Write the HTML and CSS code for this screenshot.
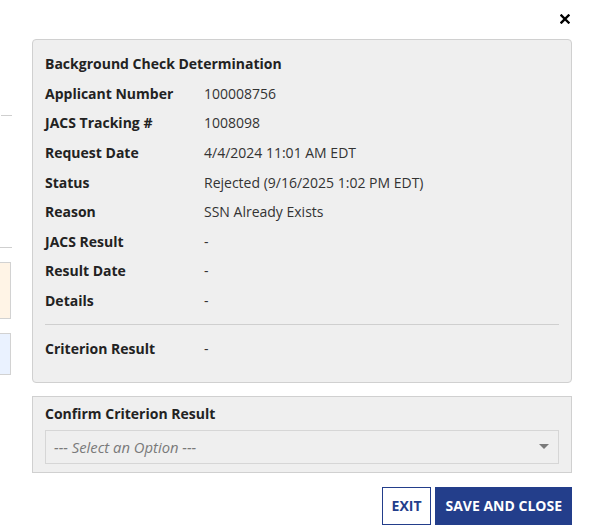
FILE: index.html
```html
<!DOCTYPE html>
<html lang="en">
<head>
    <meta charset="UTF-8">
    <title>Background Check Determination</title>
    <link rel="stylesheet" href="styles.css">
</head>
<body>
    <div class="behind">
        <div class="behind-line first"></div>
        <div class="behind-line second"></div>
        <div class="behind-box notice"></div>
        <div class="behind-box info"></div>
    </div>
    <div class="modal">
        <div class="modal-top">
            <span class="close-btn" title="Close">
                <svg width="10" height="10" viewBox="0 0 10 10">
                    <path d="M1.5 1.5 L8.5 8.5 M8.5 1.5 L1.5 8.5" stroke="#000" stroke-width="2.4" stroke-linecap="square"/>
                </svg>
            </span>
        </div>

        <div class="panel details">
            <div class="row title">Background Check Determination</div>
            <div class="row"><span class="label">Applicant Number</span><span class="value">100008756</span></div>
            <div class="row"><span class="label">JACS Tracking #</span><span class="value">1008098</span></div>
            <div class="row"><span class="label">Request Date</span><span class="value">4/4/2024 11:01 AM EDT</span></div>
            <div class="row"><span class="label">Status</span><span class="value">Rejected (9/16/2025 1:02 PM EDT)</span></div>
            <div class="row"><span class="label">Reason</span><span class="value">SSN Already Exists</span></div>
            <div class="row"><span class="label">JACS Result</span><span class="value">-</span></div>
            <div class="row"><span class="label">Result Date</span><span class="value">-</span></div>
            <div class="row"><span class="label">Details</span><span class="value">-</span></div>
            <hr>
            <div class="row"><span class="label">Criterion Result</span><span class="value">-</span></div>
        </div>

        <div class="panel confirm">
            <div class="confirm-label">Confirm Criterion Result</div>
            <div class="select">
                <span>--- Select an Option ---</span>
                <span class="caret"></span>
            </div>
        </div>

        <div class="actions">
            <button class="btn btn-outline">Exit</button>
            <button class="btn btn-primary">Save and Close</button>
        </div>
    </div>
</body>
</html>
```

FILE: styles.css
```css
body {
    margin: 0;
    padding: 0;
    font-family: 'Open Sans', 'Liberation Sans', sans-serif;
    font-size: 14px;
    color: #222;
    background-color: #fff;
    display: flex;
    height: 532px;
    overflow: hidden;
}

.behind {
    width: 12px;
    flex-shrink: 0;
    position: relative;
}

.behind-line {
    height: 1px;
    background-color: #cfcfcf;
}

.behind-line.first {
    margin: 115px 0 0 1px;
}

.behind-line.second {
    margin-top: 131px;
}

.behind-box {
    width: 10px;
    border: 1px solid #d2d2d2;
    border-left: none;
    margin-right: 1px;
}

.behind-box.notice {
    height: 55px;
    margin-top: 14px;
    background-color: #fff4e6;
}

.behind-box.info {
    height: 40px;
    margin-top: 14px;
    background-color: #eaf2ff;
}

.modal {
    flex: 1;
    padding: 0 22px 0 20px;
}

.modal-top {
    height: 39px;
    display: flex;
    justify-content: flex-end;
    align-items: flex-start;
}

.close-btn {
    margin-top: 14px;
    margin-right: 2px;
    cursor: pointer;
    line-height: 0;
}

.panel {
    background-color: #efefef;
    border: 1px solid #d0d0d0;
}

.details {
    border-radius: 4px;
    padding: 9px 12px 19px;
}

.row {
    display: flex;
    align-items: center;
    height: 29.6px;
}

.row.title,
.label,
.confirm-label {
    font-weight: bold;
    color: #222;
}

.label {
    width: 159px;
    flex-shrink: 0;
}

.value {
    color: #333;
}

hr {
    border: none;
    border-top: 1px solid #cfcfcf;
    margin: 9px 0 8px;
}

.confirm {
    margin-top: 13px;
    padding: 7px 12px 8px;
}

.confirm-label {
    line-height: 20px;
    margin-bottom: 6px;
}

.select {
    height: 32px;
    border: 1px solid #d6d6d6;
    display: flex;
    align-items: center;
    justify-content: space-between;
    padding: 0 8px;
    color: #7a7a7a;
    font-style: italic;
    font-size: 14.8px;
}

.caret {
    width: 0;
    height: 0;
    border-left: 5px solid transparent;
    border-right: 5px solid transparent;
    border-top: 5px solid #7a7a7a;
    margin-right: 1px;
}

.actions {
    display: flex;
    justify-content: flex-end;
    gap: 4px;
    margin-top: 14px;
}

.btn {
    font-family: 'Open Sans', 'Liberation Sans', sans-serif;
    font-size: 14px;
    font-weight: bold;
    text-transform: uppercase;
    height: 38px;
    padding: 0 9px;
    border: 1px solid #233e8b;
    border-radius: 0;
    cursor: pointer;
}

.btn-outline {
    background-color: #fff;
    color: #233e8b;
}

.btn-primary {
    background-color: #233e8b;
    color: #fff;
}
```
